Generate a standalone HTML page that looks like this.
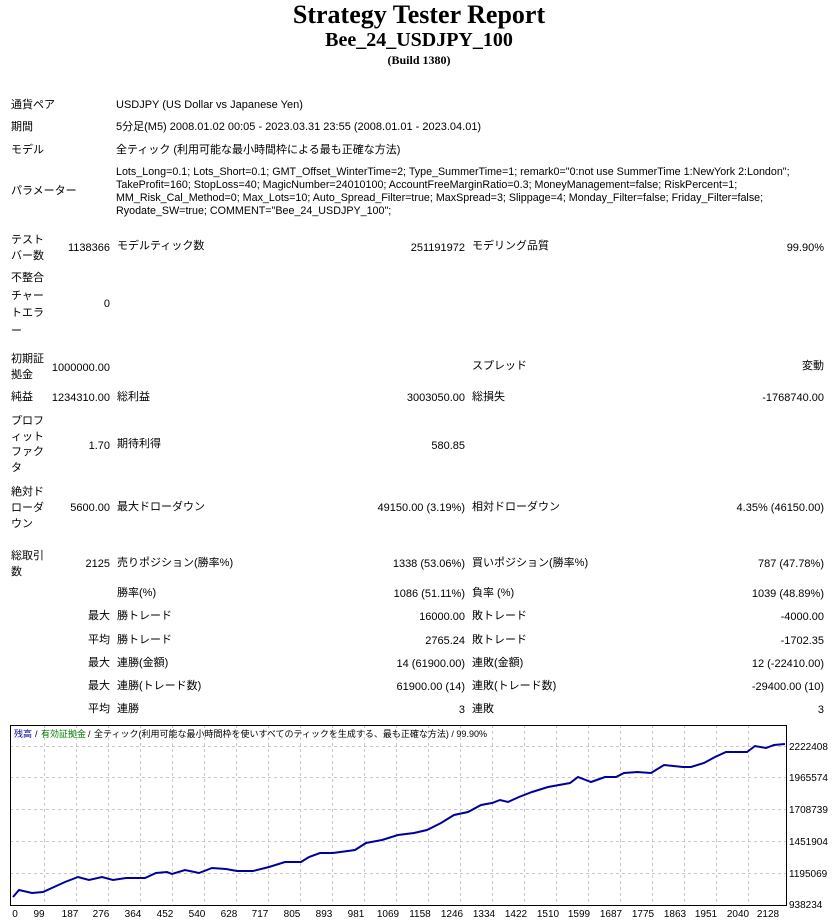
<!DOCTYPE html>
<html><head><meta charset="utf-8"><style>
body{margin:0;width:838px;height:920px;background:#fff;position:relative;overflow:hidden;font-family:"Liberation Sans","Noto Sans CJK JP",sans-serif;font-size:11px;color:#000}
.t{position:absolute;line-height:14px;white-space:nowrap}
.r{position:absolute;line-height:14px;white-space:nowrap;text-align:right}
.h{position:absolute;left:0;width:838px;text-align:center;font-family:"Liberation Serif",serif;font-weight:bold;font-style:normal;white-space:nowrap}
</style></head><body>
<div class="h" style="top:0px;font-size:26px;line-height:30px">Strategy Tester Report</div>
<div class="h" style="top:28px;font-size:20px;line-height:24px">Bee_24_USDJPY_100</div>
<div class="h" style="top:53px;font-size:12px;line-height:14px">(Build 1380)</div>

<div class="t" style="left:11px;top:98px">通貨ペア</div>
<div class="t" style="left:116px;top:98px">USDJPY (US Dollar vs Japanese Yen)</div>
<div class="t" style="left:11px;top:120px">期間</div>
<div class="t" style="left:116px;top:120px">5分足(M5) 2008.01.02 00:05 - 2023.03.31 23:55 (2008.01.01 - 2023.04.01)</div>
<div class="t" style="left:11px;top:143px">モデル</div>
<div class="t" style="left:116px;top:143px">全ティック (利用可能な最小時間枠による最も正確な方法)</div>
<div class="t" style="left:11px;top:184px">パラメーター</div>
<div class="t" style="left:116px;top:166px;line-height:13px;transform:scaleX(0.975);transform-origin:0 0">Lots_Long=0.1; Lots_Short=0.1; GMT_Offset_WinterTime=2; Type_SummerTime=1; remark0="0:not use SummerTime 1:NewYork 2:London";<br>TakeProfit=160; StopLoss=40; MagicNumber=24010100; AccountFreeMarginRatio=0.3; MoneyManagement=false; RiskPercent=1;<br>MM_Risk_Cal_Method=0; Max_Lots=10; Auto_Spread_Filter=true; MaxSpread=3; Slippage=4; Monday_Filter=false; Friday_Filter=false;<br>Ryodate_SW=true; COMMENT="Bee_24_USDJPY_100";</div>

<div class="t" style="left:11px;top:232px;line-height:16px">テスト<br>バー数</div>
<div class="r" style="right:728px;top:241px">1138366</div>
<div class="t" style="left:117px;top:239px">モデルティック数</div>
<div class="r" style="right:373px;top:241px">251191972</div>
<div class="t" style="left:472px;top:239px">モデリング品質</div>
<div class="r" style="right:14px;top:241px">99.90%</div>

<div class="t" style="left:11px;top:270px;line-height:17.7px">不整合<br>チャー<br>トエラ<br>ー</div>
<div class="r" style="right:728px;top:297px">0</div>

<div class="t" style="left:11px;top:351px;line-height:16px">初期証<br>拠金</div>
<div class="r" style="right:728px;top:361px">1000000.00</div>
<div class="t" style="left:472px;top:359px">スプレッド</div>
<div class="r" style="right:14px;top:359px">変動</div>

<div class="t" style="left:11px;top:390px">純益</div>
<div class="r" style="right:728px;top:391px">1234310.00</div>
<div class="t" style="left:117px;top:390px">総利益</div>
<div class="r" style="right:373px;top:391px">3003050.00</div>
<div class="t" style="left:472px;top:390px">総損失</div>
<div class="r" style="right:14px;top:391px">-1768740.00</div>

<div class="t" style="left:11px;top:414px;line-height:15.7px">プロフ<br>ィット<br>ファク<br>タ</div>
<div class="r" style="right:728px;top:439px">1.70</div>
<div class="t" style="left:117px;top:437px">期待利得</div>
<div class="r" style="right:373px;top:439px">580.85</div>

<div class="t" style="left:11px;top:484px;line-height:16px">絶対ド<br>ローダ<br>ウン</div>
<div class="r" style="right:728px;top:501px">5600.00</div>
<div class="t" style="left:117px;top:500px">最大ドローダウン</div>
<div class="r" style="right:373px;top:501px">49150.00 (3.19%)</div>
<div class="t" style="left:472px;top:500px">相対ドローダウン</div>
<div class="r" style="right:14px;top:501px">4.35% (46150.00)</div>

<div class="t" style="left:11px;top:548px;line-height:16px">総取引<br>数</div>
<div class="r" style="right:728px;top:557px">2125</div>
<div class="t" style="left:117px;top:556px">売りポジション(勝率%)</div>
<div class="r" style="right:373px;top:557px">1338 (53.06%)</div>
<div class="t" style="left:472px;top:556px">買いポジション(勝率%)</div>
<div class="r" style="right:14px;top:557px">787 (47.78%)</div>

<div class="t" style="left:117px;top:586px">勝率(%)</div>
<div class="r" style="right:373px;top:587px">1086 (51.11%)</div>
<div class="t" style="left:472px;top:586px">負率 (%)</div>
<div class="r" style="right:14px;top:587px">1039 (48.89%)</div>

<div class="r" style="right:728px;top:609px">最大</div>
<div class="t" style="left:117px;top:609px">勝トレード</div>
<div class="r" style="right:373px;top:610px">16000.00</div>
<div class="t" style="left:472px;top:609px">敗トレード</div>
<div class="r" style="right:14px;top:610px">-4000.00</div>

<div class="r" style="right:728px;top:633px">平均</div>
<div class="t" style="left:117px;top:633px">勝トレード</div>
<div class="r" style="right:373px;top:634px">2765.24</div>
<div class="t" style="left:472px;top:633px">敗トレード</div>
<div class="r" style="right:14px;top:634px">-1702.35</div>

<div class="r" style="right:728px;top:656px">最大</div>
<div class="t" style="left:117px;top:656px">連勝(金額)</div>
<div class="r" style="right:373px;top:657px">14 (61900.00)</div>
<div class="t" style="left:472px;top:656px">連敗(金額)</div>
<div class="r" style="right:14px;top:657px">12 (-22410.00)</div>

<div class="r" style="right:728px;top:679px">最大</div>
<div class="t" style="left:117px;top:679px">連勝(トレード数)</div>
<div class="r" style="right:373px;top:680px">61900.00 (14)</div>
<div class="t" style="left:472px;top:679px">連敗(トレード数)</div>
<div class="r" style="right:14px;top:680px">-29400.00 (10)</div>

<div class="r" style="right:728px;top:702px">平均</div>
<div class="t" style="left:117px;top:702px">連勝</div>
<div class="r" style="right:373px;top:703px">3</div>
<div class="t" style="left:472px;top:702px">連敗</div>
<div class="r" style="right:14px;top:703px">3</div>

<svg style="position:absolute;left:0;top:720px" width="838" height="200" xmlns="http://www.w3.org/2000/svg" font-family="Liberation Sans, sans-serif" font-size="10">
<rect x="0" y="0" width="838" height="200" fill="#fff"/>
<g stroke="#c8c8c8" stroke-dasharray="3,3" stroke-width="1">
<line x1="10" x2="786" y1="26.5" y2="26.5"/><line x1="10" x2="786" y1="57.5" y2="57.5"/><line x1="10" x2="786" y1="89.5" y2="89.5"/><line x1="10" x2="786" y1="121.5" y2="121.5"/><line x1="10" x2="786" y1="153.5" y2="153.5"/>
<line y1="5" y2="185" x1="44.5" x2="44.5"/><line y1="5" y2="185" x1="76.5" x2="76.5"/><line y1="5" y2="185" x1="108.5" x2="108.5"/><line y1="5" y2="185" x1="140.5" x2="140.5"/><line y1="5" y2="185" x1="172.5" x2="172.5"/><line y1="5" y2="185" x1="204.5" x2="204.5"/><line y1="5" y2="185" x1="236.5" x2="236.5"/><line y1="5" y2="185" x1="268.5" x2="268.5"/><line y1="5" y2="185" x1="300.5" x2="300.5"/><line y1="5" y2="185" x1="332.5" x2="332.5"/><line y1="5" y2="185" x1="364.5" x2="364.5"/><line y1="5" y2="185" x1="396.5" x2="396.5"/><line y1="5" y2="185" x1="428.5" x2="428.5"/><line y1="5" y2="185" x1="460.5" x2="460.5"/><line y1="5" y2="185" x1="492.5" x2="492.5"/><line y1="5" y2="185" x1="524.5" x2="524.5"/><line y1="5" y2="185" x1="556.5" x2="556.5"/><line y1="5" y2="185" x1="588.5" x2="588.5"/><line y1="5" y2="185" x1="620.5" x2="620.5"/><line y1="5" y2="185" x1="652.5" x2="652.5"/><line y1="5" y2="185" x1="684.5" x2="684.5"/><line y1="5" y2="185" x1="716.5" x2="716.5"/><line y1="5" y2="185" x1="748.5" x2="748.5"/>
</g>
<rect x="10.5" y="5.5" width="776" height="180" fill="none" stroke="#000"/>
<polyline fill="none" stroke="#00009c" stroke-width="2" points="13,177 19,170 32,173 43,172 54,167 65,162 78,157 89,160 102,157 113,160 126,158 145,158 156,153 167,152 172,154 185,150 199,153 212,148 226,149 237,151 253,151 269,147 285,142 301,142 309,137 320,133 333,133 355,130 366,123 382,120 398,115 414,113 427,110 441,103 454,95 468,92 481,85 492,83 500,80 508,82 519,77 532,72 548,67 559,65 570,63 578,57 591,62 605,57 616,57 624,53 637,52 651,53 664,45 683,47 691,47 704,43 715,37 726,32 747,32 755,26 766,28 774,25 785,24"/>
<text x="14" y="17" font-size="9" fill="#00009c">残高</text><text x="35" y="17" font-size="9">/</text>
<text x="41" y="17" font-size="9" fill="#008000">有効証拠金</text><text x="88" y="17" font-size="9">/</text>
<text x="94" y="17" font-size="9" font-family="Liberation Sans, Noto Sans CJK JP, sans-serif">全ティック(利用可能な最小時間枠を使いすべてのティックを生成する、最も正確な方法) / 99.90%</text>
<g font-size="10"><text x="789" y="30">2222408</text><text x="789" y="61">1965574</text><text x="789" y="93">1708739</text><text x="789" y="125">1451904</text><text x="789" y="157">1195069</text><text x="789" y="188">938234</text></g>
<g font-size="10" text-anchor="middle"><text x="15" y="197">0</text><text x="39" y="197">99</text><text x="70" y="197">187</text><text x="101" y="197">276</text><text x="133" y="197">364</text><text x="165" y="197">452</text><text x="197" y="197">540</text><text x="229" y="197">628</text><text x="260" y="197">717</text><text x="292" y="197">805</text><text x="324" y="197">893</text><text x="356" y="197">981</text><text x="388" y="197">1069</text><text x="420" y="197">1158</text><text x="452" y="197">1246</text><text x="484" y="197">1334</text><text x="516" y="197">1422</text><text x="548" y="197">1510</text><text x="579" y="197">1599</text><text x="611" y="197">1687</text><text x="643" y="197">1775</text><text x="675" y="197">1863</text><text x="706" y="197">1951</text><text x="738" y="197">2040</text><text x="768" y="197">2128</text></g>
</svg>
</body></html>
